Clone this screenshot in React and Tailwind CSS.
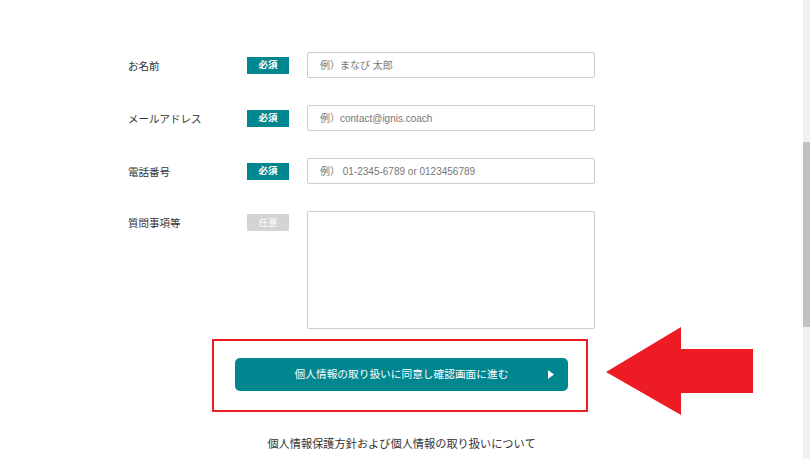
import React from 'react';

const FONT = "font-['Liberation_Sans','Noto_Sans_CJK_JP',sans-serif]";

const fields = [
  { label: 'お名前', required: true, placeholder: '例）まなび 太郎' },
  { label: 'メールアドレス', required: true, placeholder: '例）contact@ignis.coach' },
  { label: '電話番号', required: true, placeholder: '例） 01-2345-6789 or 0123456789' },
];

function Badge({ required }) {
  return (
    <span
      className={
        'flex h-[17px] w-[42px] shrink-0 items-center justify-center text-[9.5px] leading-none text-white ' +
        (required ? 'bg-[#00868f] font-bold' : 'bg-[#d4d4d4]')
      }
    >
      {required ? '必須' : '任意'}
    </span>
  );
}

function FieldRow({ field }) {
  return (
    <div className="flex h-[26px] items-center">
      <span className="w-[119px] shrink-0 pt-[3px] text-[10.5px] text-[#333]">{field.label}</span>
      <Badge required />
      <div className="ml-[18px] flex h-[26px] w-[288px] items-center rounded-[2px] border border-[#cccccc] bg-white pl-[12px] pt-[1px] text-[10px] text-[#777]">
        {field.placeholder}
      </div>
    </div>
  );
}

export default function App() {
  return (
    <div className={`flex h-[459px] w-[810px] overflow-hidden bg-white ${FONT}`}>
      {/* Main form area */}
      <div className="relative flex-1">
        <div className="flex flex-col gap-[27px] pl-[128px] pt-[52px]">
          {fields.map((f) => (
            <FieldRow key={f.label} field={f} />
          ))}

          {/* Question textarea */}
          <div className="flex h-[118px] items-start">
            <span className="mt-[5px] w-[119px] shrink-0 text-[10.5px] text-[#333]">質問事項等</span>
            <div className="mt-[3px]">
              <Badge required={false} />
            </div>
            <div className="ml-[18px] h-[118px] w-[288px] rounded-[2px] border border-[#cccccc] bg-white" />
          </div>
        </div>

        {/* Highlighted submit button */}
        <div className="ml-[212px] mt-[10px] h-[73px] w-[376px] border-2 border-[#ec1c24] pl-[21px] pt-[17px]">
          <button className="relative flex h-[33px] w-[333px] items-center justify-center rounded-[5px] bg-[#00868f] text-[10.7px] text-white">
            個人情報の取り扱いに同意し確認画面に進む
            <svg className="absolute left-[313px] top-[12px]" width="6" height="9" viewBox="0 0 6 9">
              <polygon points="0,0 6,4.5 0,9" fill="#ffffff" />
            </svg>
          </button>
        </div>

        <p className="mt-[24px] text-center text-[11.2px] text-[#333]">
          個人情報保護方針および個人情報の取り扱いについて
        </p>

        {/* Red pointing arrow */}
        <svg className="absolute left-[606px] top-[327px]" width="147" height="88" viewBox="0 0 147 88">
          <polygon points="0,45 75,0 75,22 147,22 147,66 75,66 75,88" fill="#ed1c24" />
        </svg>
      </div>

      {/* Scrollbar */}
      <div className="flex w-[7px] shrink-0 flex-col bg-[#f1f1f1]">
        <div className="mt-[142px] h-[185px] w-full bg-[#c1c1c1]" />
      </div>
    </div>
  );
}
